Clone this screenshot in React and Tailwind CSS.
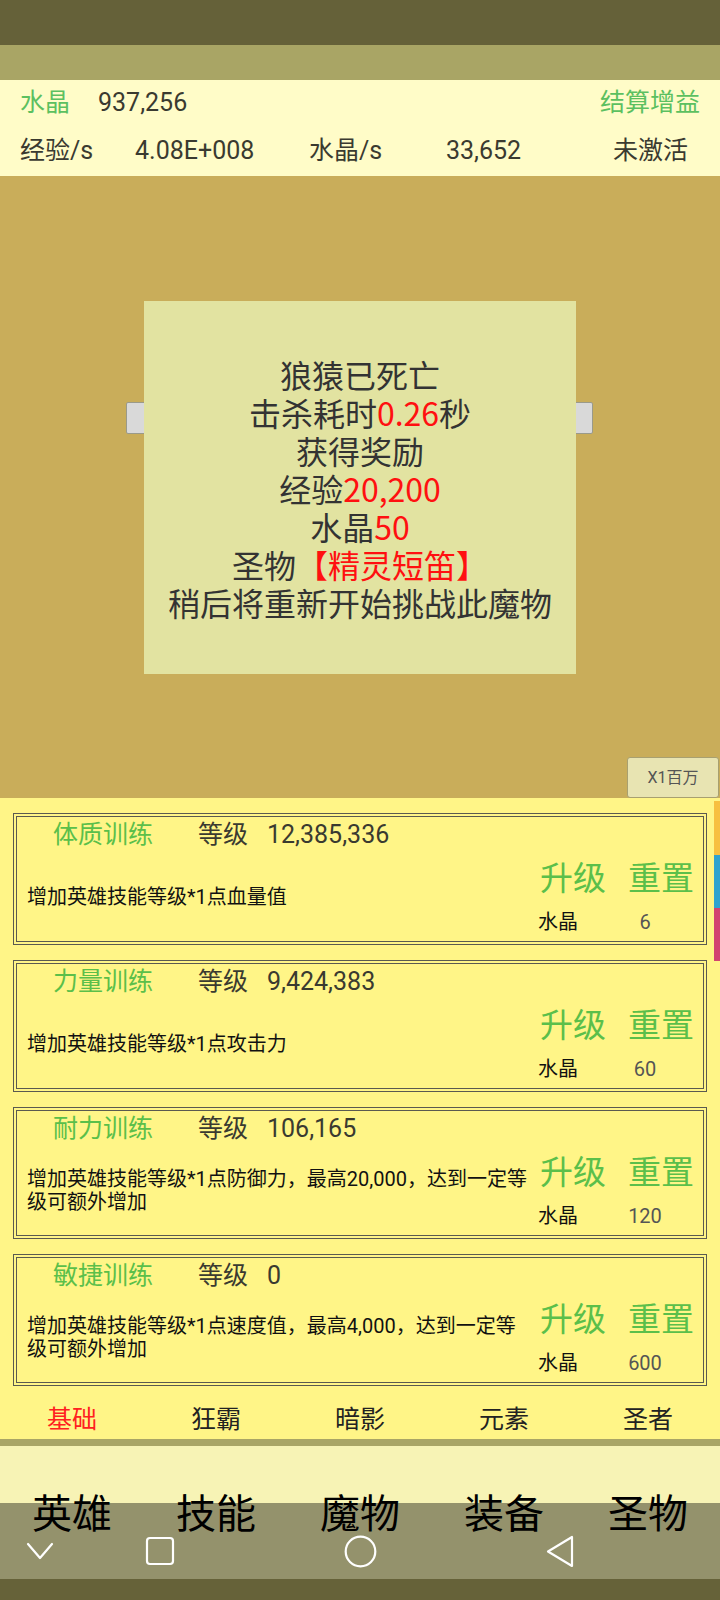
import React from 'react';

const cards = [
  { name: '体质训练', level: '12,385,336', desc: '增加英雄技能等级*1点血量值', cost: '6', descW: 'w-[505px]' },
  { name: '力量训练', level: '9,424,383', desc: '增加英雄技能等级*1点攻击力', cost: '60', descW: 'w-[505px]' },
  { name: '耐力训练', level: '106,165', desc: '增加英雄技能等级*1点防御力，最高20,000，达到一定等级可额外增加', cost: '120', descW: 'w-[505px]' },
  { name: '敏捷训练', level: '0', desc: '增加英雄技能等级*1点速度值，最高4,000，达到一定等级可额外增加', cost: '600', descW: 'w-[490px]' },
];

const tabs = ['基础', '狂霸', '暗影', '元素', '圣者'];
const menus = ['英雄', '技能', '魔物', '装备', '圣物'];

function TrainingCard({ card }) {
  return (
    <div className="h-[132px] border-4 border-double border-[#5a5a50] flex flex-col">
      {/* title row */}
      <div className="flex items-center h-[36px] pl-[36px] text-[25px] leading-[36px]">
        <span className="text-[#5bbf4a] w-[145px]">{card.name}</span>
        <span className="text-[#3a3a30] w-[69px]">等级</span>
        <span className="text-[#3a3a30]">{card.level}</span>
      </div>
      <div className="flex flex-1">
        <div className="w-[520px] shrink-0 pl-[10px] flex items-center text-[20px] leading-[23px] text-[#111] font-['Roboto','Noto_Sans_CJK_SC',sans-serif]">
          <p className={card.descW}>{card.desc}</p>
        </div>
        <div className="flex flex-col pt-[6px] pl-[1px]">
          <div className="flex text-[33px] leading-[40px] text-[#5bbf4a]">
            <span className="ml-[2px]">升级</span>
            <span className="ml-[22px]">重置</span>
          </div>
          <div className="flex text-[20px] leading-[24px] mt-[11px] text-[#333]">
            <span className="text-[#111]">水晶</span>
            <span className="ml-[37px] w-[60px] text-center text-[#555]">{card.cost}</span>
          </div>
        </div>
      </div>
    </div>
  );
}

function Line({ children }) {
  return <p className="h-[38px] leading-[38px] whitespace-nowrap">{children}</p>;
}

export default function App() {
  return (
    <div className="w-[720px] h-[1600px] overflow-hidden flex flex-col font-['Roboto','Noto_Sans_CJK_SC',sans-serif] text-[#3a3a30]">
      {/* status bar */}
      <div className="h-[45px] bg-[#656139]" />
      <div className="h-[35px] bg-[#a9a565]" />

      {/* resource header */}
      <div className="h-[96px] bg-[#fffcc8] text-[25px]">
        <div className="h-[46px] flex items-center px-[20px]">
          <span className="text-[#5cc060] w-[78px]">水晶</span>
          <span>937,256</span>
          <span className="ml-auto text-[#5cc060]">结算增益</span>
        </div>
        <div className="h-[50px] flex items-center pl-[20px]">
          <span className="w-[115px]">经验/s</span>
          <span className="w-[174px]">4.08E+008</span>
          <span className="w-[137px]">水晶/s</span>
          <span className="w-[167px]">33,652</span>
          <span>未激活</span>
        </div>
      </div>

      {/* battle area */}
      <div className="h-[622px] bg-[#c9ad5a] flex flex-col">
        <div className="relative ml-[144px] mt-[125px] w-[432px] h-[373px]">
          <div className="absolute left-[-18px] top-[101px] w-[20px] h-[32px] bg-[#d9d9d9] border border-[#9a9a8a] rounded-[2px]" />
          <div className="absolute right-[-17px] top-[101px] w-[19px] h-[32px] bg-[#d9d9d9] border border-[#9a9a8a] rounded-[2px]" />
          <div className="relative w-full h-full bg-[#e2e3a1] flex flex-col items-center justify-center text-[32px] text-[#333] font-['Noto_Sans_CJK_SC',sans-serif]">
            <Line>狼猿已死亡</Line>
            <Line>击杀耗时<span className="text-[#ff1010]">0.26</span>秒</Line>
            <Line>获得奖励</Line>
            <Line>经验<span className="text-[#ff1010]">20,200</span></Line>
            <Line>水晶<span className="text-[#ff1010]">50</span></Line>
            <Line>圣物<span className="text-[#ff1010]">【精灵短笛】</span></Line>
            <Line>稍后将重新开始挑战此魔物</Line>
          </div>
        </div>
        <button className="mt-auto self-end mr-[1px] w-[92px] h-[41px] bg-[#e8e4b2] border border-[#a8a070] rounded-[3px] text-[16px] text-[#555]">
          X1百万
        </button>
      </div>

      {/* training panel */}
      <div className="relative h-[641px] bg-[#fff587]">
        <div className="absolute right-0 top-[3px] w-[6px] flex flex-col">
          <div className="h-[54px] bg-[#f7c040]" />
          <div className="h-[53px] bg-[#2fa3cf]" />
          <div className="h-[53px] bg-[#d24470]" />
        </div>
        <div className="pt-[15px] pl-[13px] w-[707px] flex flex-col gap-[15px]">
          {cards.map((c) => (
            <TrainingCard key={c.name} card={c} />
          ))}
        </div>
        <div className="flex pt-[21px] text-[25px] leading-[26px]">
          {tabs.map((t, i) => (
            <div key={t} className={`w-[144px] text-center ${i === 0 ? 'text-[#ff2020]' : 'text-[#222]'}`}>
              {t}
            </div>
          ))}
        </div>
      </div>

      <div className="h-[7px] bg-[#a9a566]" />

      {/* bottom menu + system nav */}
      <div className="relative h-[133px] bg-[#f7f3b5]">
        <div className="flex pt-[40px] text-[40px] leading-[50px] text-black font-['Noto_Sans_CJK_SC',sans-serif]">
          {menus.map((m) => (
            <div key={m} className="w-[144px] text-center">{m}</div>
          ))}
        </div>
        <div className="absolute left-0 right-0 top-[57px] h-[76px] bg-black/40 flex items-center pt-[20px]">
          <div className="w-[80px] flex justify-center">
            <svg width="28" height="18" viewBox="0 0 28 18" fill="none" stroke="white" strokeWidth="2.2" strokeLinecap="round" strokeLinejoin="round">
              <polyline points="2,2 14,16 26,2" />
            </svg>
          </div>
          <div className="w-[160px] flex justify-center">
            <svg width="30" height="30" viewBox="0 0 30 30" fill="none" stroke="white" strokeWidth="2.2">
              <rect x="2" y="2" width="26" height="26" rx="3" />
            </svg>
          </div>
          <div className="w-[240px] flex justify-center">
            <svg width="33" height="33" viewBox="0 0 33 33" fill="none" stroke="white" strokeWidth="2.2">
              <circle cx="16.5" cy="16.5" r="14.8" />
            </svg>
          </div>
          <div className="w-[160px] flex justify-center">
            <svg width="30" height="33" viewBox="0 0 30 33" fill="none" stroke="white" strokeWidth="2.2" strokeLinejoin="round">
              <path d="M27 2 L27 31 L3 16.5 Z" />
            </svg>
          </div>
        </div>
      </div>
      <div className="h-[21px] bg-[#666239]" />
    </div>
  );
}
